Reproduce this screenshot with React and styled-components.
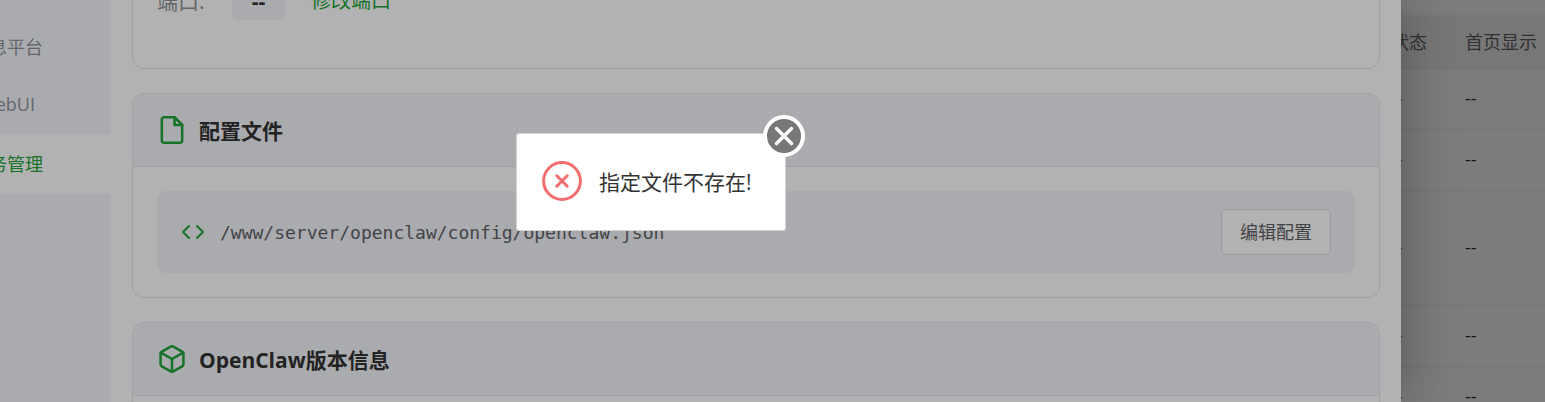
import React from "react";
import styled, { createGlobalStyle } from "styled-components";
import { Box, Code } from "lucide-react";

const menu = [
  { label: "消息平台" },
  { label: "WebUI" },
  { label: "服务管理", active: true },
];

const rows = [{}, {}, { tall: true }, {}, {}];

export default function App() {
  return (
    <Page>
      <GlobalStyle />
      <Modal>
        <Sidebar>
          {menu.map((item) => (
            <MenuItem key={item.label} href="#" $active={item.active}>
              {item.label}
            </MenuItem>
          ))}
        </Sidebar>
        <Main>
          <Card>
            <PortBody>
              <PortLabel>端口:</PortLabel>
              <PortValue>--</PortValue>
              <PortLink href="#">修改端口</PortLink>
            </PortBody>
          </Card>
          <Card>
            <CardHeader>
              <FileIcon viewBox="1 1 22 22">
                <path d="M14 2H6a2 2 0 0 0-2 2v16a2 2 0 0 0 2 2h12a2 2 0 0 0 2-2V8z" />
                <path d="M14 2v6h6" />
              </FileIcon>
              <Title>配置文件</Title>
            </CardHeader>
            <CardBody>
              <FileRow>
                <Code size={24} />
                <FilePath>/www/server/openclaw/config/openclaw.json</FilePath>
                <EditButton type="button">编辑配置</EditButton>
              </FileRow>
            </CardBody>
          </Card>
          <Card>
            <CardHeader>
              <Box size={28} viewBox="1 1 22 22" />
              <Title>OpenClaw版本信息</Title>
            </CardHeader>
            <CardBody />
          </Card>
        </Main>
      </Modal>
      <Behind>
        <Table>
          <thead>
            <tr>
              <th>状态</th>
              <th>首页显示</th>
            </tr>
          </thead>
          <tbody>
            {rows.map((row, i) => (
              <Row key={i} $tall={row.tall}>
                <td>--</td>
                <td>--</td>
              </Row>
            ))}
          </tbody>
        </Table>
      </Behind>
      <Shade $level={1} />
      <Shade $level={3} />
      <Toast role="alert">
        <ErrorIcon viewBox="0 0 40 40">
          <circle cx="20" cy="20" r="18.4" />
          <path d="M14.8 14.8l10.4 10.4M25.2 14.8l-10.4 10.4" />
        </ErrorIcon>
        <span>指定文件不存在!</span>
        <CloseButton type="button" aria-label="关闭">
          <svg viewBox="0 0 34 34">
            <path d="M9.5 9.5l15 15M24.5 9.5l-15 15" />
          </svg>
        </CloseButton>
      </Toast>
    </Page>
  );
}

const GlobalStyle = createGlobalStyle`
  * {
    box-sizing: border-box;
  }

  body {
    margin: 0;
    font-family: "Open Sans", "Noto Sans CJK SC", sans-serif;
    font-size: 18px;
    color: #333;
  }

  a {
    text-decoration: none;
  }
`;

const Page = styled.div`
  position: relative;
  display: flex;
  height: 100vh;
  overflow: hidden;
  background: #fff;
`;

// Dark layer, one under the modal and one over it
const Shade = styled.div`
  position: absolute;
  inset: 0;
  z-index: ${(props) => props.$level};
  background: rgba(0, 0, 0, 0.3);
`;

const Modal = styled.section`
  position: relative;
  z-index: 2;
  flex: 1;
  display: flex;
  min-width: 0;
  background: #fff;
  box-shadow: 1px 1px 50px rgba(0, 0, 0, 0.3);
`;

const Sidebar = styled.nav`
  display: flex;
  flex-direction: column;
  flex: none;
  width: 208px;
  margin-left: -97px;
  padding-top: 18px;
  background: #f4f5fb;
`;

const MenuItem = styled.a`
  display: flex;
  align-items: center;
  justify-content: center;
  height: ${(props) => (props.$active ? "60px" : "58px")};
  padding-bottom: 2px;
  background: ${(props) => (props.$active ? "#fff" : "transparent")};
  color: ${(props) => (props.$active ? "#20a53a" : "#909399")};
`;

const Main = styled.main`
  flex: 1;
  display: flex;
  flex-direction: column;
  gap: 24px;
  min-width: 0;
  margin-top: -43px;
  padding: 0 21px;
`;

const Card = styled.article`
  flex: none;
  border: 1px solid #e4e5ec;
  border-radius: 12px;
  overflow: hidden;
`;

const CardHeader = styled.header`
  display: flex;
  align-items: center;
  gap: 13px;
  height: 73px;
  padding: 0 25px;
  border-bottom: 1px solid #e4e5ec;
  background: #f4f5fb;

  svg {
    color: #20a53a;
  }
`;

const FileIcon = styled.svg`
  width: 28px;
  height: 28px;
  fill: none;
  stroke: currentColor;
  stroke-width: 2;
  stroke-linecap: round;
  stroke-linejoin: round;
`;

const Title = styled.h3`
  margin: 0;
  font-size: 21px;
  font-weight: 700;
`;

const CardBody = styled.div`
  padding: 24px;
`;

const PortBody = styled.div`
  display: flex;
  align-items: center;
  padding: 24px 24px 48px;
`;

const PortLabel = styled.span`
  width: 75px;
  font-size: 21px;
  line-height: 38px;
  color: #909399;
`;

const PortValue = styled.b`
  width: 53px;
  border-radius: 6px;
  background: #f4f5fb;
  font-size: 21px;
  line-height: 38px;
  text-align: center;
`;

const PortLink = styled.a`
  margin-left: 26px;
  font-size: 20px;
  line-height: 38px;
  color: #20a53a;
`;

const FileRow = styled.div`
  display: flex;
  align-items: center;
  gap: 15px;
  padding: 18px 24px;
  border-radius: 8px;
  background: #f4f5fb;

  svg {
    color: #20a53a;
  }
`;

const FilePath = styled.code`
  flex: 1;
  font-family: "DejaVu Sans Mono", monospace;
  font-size: 18px;
  color: #606266;
`;

const EditButton = styled.button`
  height: 46px;
  padding: 0 18px 2px;
  border: 1px solid #dcdfe6;
  border-radius: 6px;
  background: #fff;
  font-family: inherit;
  font-size: 18px;
  color: #606266;
  cursor: pointer;
`;

const Behind = styled.div`
  flex: none;
  width: 144px;
  padding-top: 15px;
  overflow: hidden;
`;

const Table = styled.table`
  width: 200px;
  margin-left: -28px;
  border-spacing: 0;
  table-layout: fixed;

  th,
  td {
    padding: 0 18px 2px;
    border-bottom: 1px solid #ebeef5;
    text-align: left;
    white-space: nowrap;
  }

  th {
    height: 54px;
    background: #f5f5f5;
    font-weight: 400;
    color: #666;
  }

  th:first-child {
    width: 74px;
  }
`;

const Row = styled.tr`
  height: ${(props) => (props.$tall ? "115px" : "61px")};
`;

const Toast = styled.div`
  position: absolute;
  top: 133px;
  left: 516px;
  z-index: 4;
  display: flex;
  align-items: center;
  gap: 17px;
  width: 270px;
  height: 98px;
  padding: 0 25px 2px;
  border: 1px solid #d3d4d3;
  border-radius: 3px;
  background: #fff;
  font-size: 21px;
  white-space: nowrap;
`;

const ErrorIcon = styled.svg`
  flex: none;
  width: 40px;
  height: 40px;
  fill: none;
  stroke: #f56c6c;
  stroke-width: 3;
  stroke-linecap: round;
`;

const CloseButton = styled.button`
  position: absolute;
  top: -19px;
  right: -20px;
  width: 42px;
  height: 42px;
  padding: 0;
  border: 4px solid #fff;
  border-radius: 50%;
  background: #777;
  cursor: pointer;

  svg {
    display: block;
    fill: none;
    stroke: #fff;
    stroke-width: 3.4;
    stroke-linecap: round;
  }
`;
